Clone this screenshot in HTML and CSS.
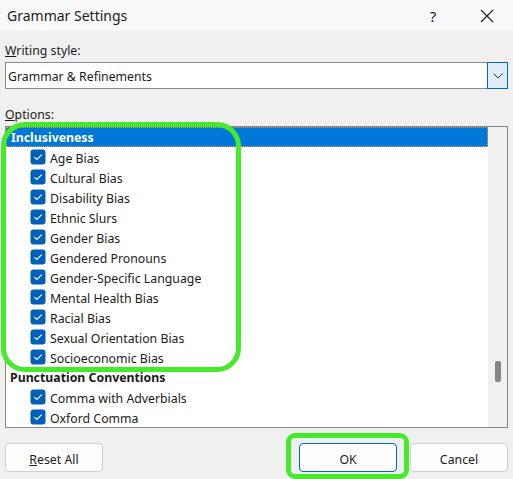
FILE: index.html
```html
<!DOCTYPE html>
<html lang="en">
<head>
    <meta charset="UTF-8">
    <meta name="viewport" content="width=device-width, initial-scale=1.0">
    <title>Grammar Settings</title>
    <link rel="stylesheet" href="styles.css">
</head>
<body>
    <div class="dialog">
        <div class="title-bar">
            <span class="title">Grammar Settings</span>
            <span class="title-help">?</span>
            <span class="title-close">
                <svg width="14" height="14" viewBox="0 0 14 14"><path d="M1 1L13 13M13 1L1 13" stroke="#1a1a1a" stroke-width="1.1" fill="none"/></svg>
            </span>
        </div>

        <div class="content">
            <label class="field-label"><u>W</u>riting style:</label>
            <div class="combo">
                <span class="combo-value">Grammar &amp; Refinements</span>
                <span class="combo-button">
                    <svg width="10" height="6" viewBox="0 0 10 6"><path d="M0.5 0.5L5 5L9.5 0.5" stroke="#333" stroke-width="1" fill="none"/></svg>
                </span>
            </div>

            <label class="field-label options-label"><u>O</u>ptions:</label>
            <div class="list-wrap">
                <div class="list">
                    <div class="list-items" id="list-items"></div>
                    <div class="scrollbar"><div class="thumb"></div></div>
                </div>
                <div class="mark mark-list"></div>
            </div>

            <div class="buttons">
                <button class="btn"><u>R</u>eset All</button>
                <div class="spacer"></div>
                <div class="ok-wrap">
                    <button class="btn btn-default">OK</button>
                    <div class="mark mark-ok"></div>
                </div>
                <button class="btn">Cancel</button>
            </div>
        </div>
    </div>

    <script>
        var groups = [
            { name: "Inclusiveness", selected: true, items: [
                "Age Bias", "Cultural Bias", "Disability Bias", "Ethnic Slurs",
                "Gender Bias", "Gendered Pronouns", "Gender-Specific Language",
                "Mental Health Bias", "Racial Bias", "Sexual Orientation Bias",
                "Socioeconomic Bias"
            ]},
            { name: "Punctuation Conventions", items: [
                "Comma with Adverbials", "Oxford Comma"
            ]}
        ];

        var checkSvg = '<svg width="16" height="16" viewBox="0 0 16 16">' +
            '<rect x="0.5" y="0.5" width="15" height="15" rx="3" fill="#005fb8"/>' +
            '<path d="M4.3 8.2L6.8 10.5L11.7 5.7" stroke="#fff" stroke-width="1.1" fill="none"/></svg>';

        var list = document.getElementById("list-items");
        groups.forEach(function(group) {
            var head = document.createElement("div");
            head.className = "group" + (group.selected ? " selected" : "");
            head.textContent = group.name;
            list.appendChild(head);
            group.items.forEach(function(item) {
                var row = document.createElement("div");
                row.className = "item";
                row.innerHTML = '<span class="check">' + checkSvg + '</span><span class="item-text"></span>';
                row.querySelector(".item-text").textContent = item;
                list.appendChild(row);
            });
        });
    </script>
</body>
</html>
```

FILE: styles.css
```css
body {
    margin: 0;
    padding: 0;
    background-color: #f0f0f0;
    font-family: "Segoe UI", "Noto Sans", sans-serif;
    font-size: 12.3px;
    color: #1a1a1a;
}

.dialog {
    width: 513px;
    height: 479px;
    overflow: hidden;
}

.title-bar {
    height: 31px;
    display: flex;
    align-items: center;
    background-color: #f9f9f9;
    padding-left: 7px;
}

.title {
    flex: 1;
    font-size: 14px;
    color: #1a1a1a;
}

.title-help {
    width: 20px;
    font-size: 15px;
    margin-right: 37px;
    text-align: center;
}

.title-close {
    width: 14px;
    margin-right: 19px;
    display: flex;
}

.content {
    padding: 0 5px;
}

.field-label {
    display: block;
    height: 18px;
    line-height: 18px;
    margin-top: 11px;
    margin-bottom: 2px;
}

.combo {
    display: flex;
    align-items: stretch;
    height: 25px;
    background-color: #fff;
    border: 1px solid #8a8a8a;
}

.combo-value {
    flex: 1;
    line-height: 27px;
    padding-left: 2px;
}

.combo-button {
    width: 19px;
    display: flex;
    align-items: center;
    justify-content: center;
    background-color: #e0eef9;
    border: 1px solid #0067c0;
    margin: -1px -1px -1px 0;
}

.options-label {
    margin-top: 17px;
}

.list-wrap {
    position: relative;
}

.list {
    display: flex;
    height: 300px;
    background-color: #fff;
    border: 1px solid #828790;
}

.list-items {
    flex: 1;
    overflow: hidden;
}

.group {
    height: 20px;
    line-height: 21px;
    padding-left: 4px;
    font-weight: bold;
    box-sizing: border-box;
}

.group.selected {
    background-color: #0078d7;
    color: #fff;
    line-height: 19px;
    border: 1px dotted #000;
    outline: 1px dotted #f0a030;
    outline-offset: -1px;
}

.item {
    height: 20px;
    display: flex;
    align-items: center;
    padding-left: 24px;
}

.check {
    width: 16px;
    height: 16px;
    margin-right: 4px;
    display: flex;
}

.item-text {
    padding-top: 2px;
}

.scrollbar {
    width: 19px;
    background-color: #f0f0f0;
    position: relative;
}

.thumb {
    position: absolute;
    left: 7px;
    top: 234px;
    width: 6px;
    height: 21px;
    border-radius: 2px;
    background-color: #858585;
}

.buttons {
    display: flex;
    margin-top: 15px;
    gap: 13px;
}

.spacer {
    flex: 1;
}

.btn {
    width: 98px;
    height: 29px;
    background-color: #fdfdfd;
    border: 1px solid #d0d0d0;
    border-radius: 4px;
    font-family: inherit;
    font-size: 12.3px;
    color: #1a1a1a;
    padding: 3px 0 0;
}

.btn-default {
    border-color: #0067c0;
}

.ok-wrap {
    position: relative;
    display: flex;
}

/* green highlight rings drawn over the dialog */
.mark {
    position: absolute;
    border: 5px solid #45ea2b;
    pointer-events: none;
}

.mark-list {
    left: -4px;
    top: -4px;
    width: 230px;
    height: 240px;
    border-radius: 24px;
}

.mark-ok {
    left: -13px;
    top: -10px;
    width: 113px;
    height: 36px;
    border-radius: 9px;
}
```
